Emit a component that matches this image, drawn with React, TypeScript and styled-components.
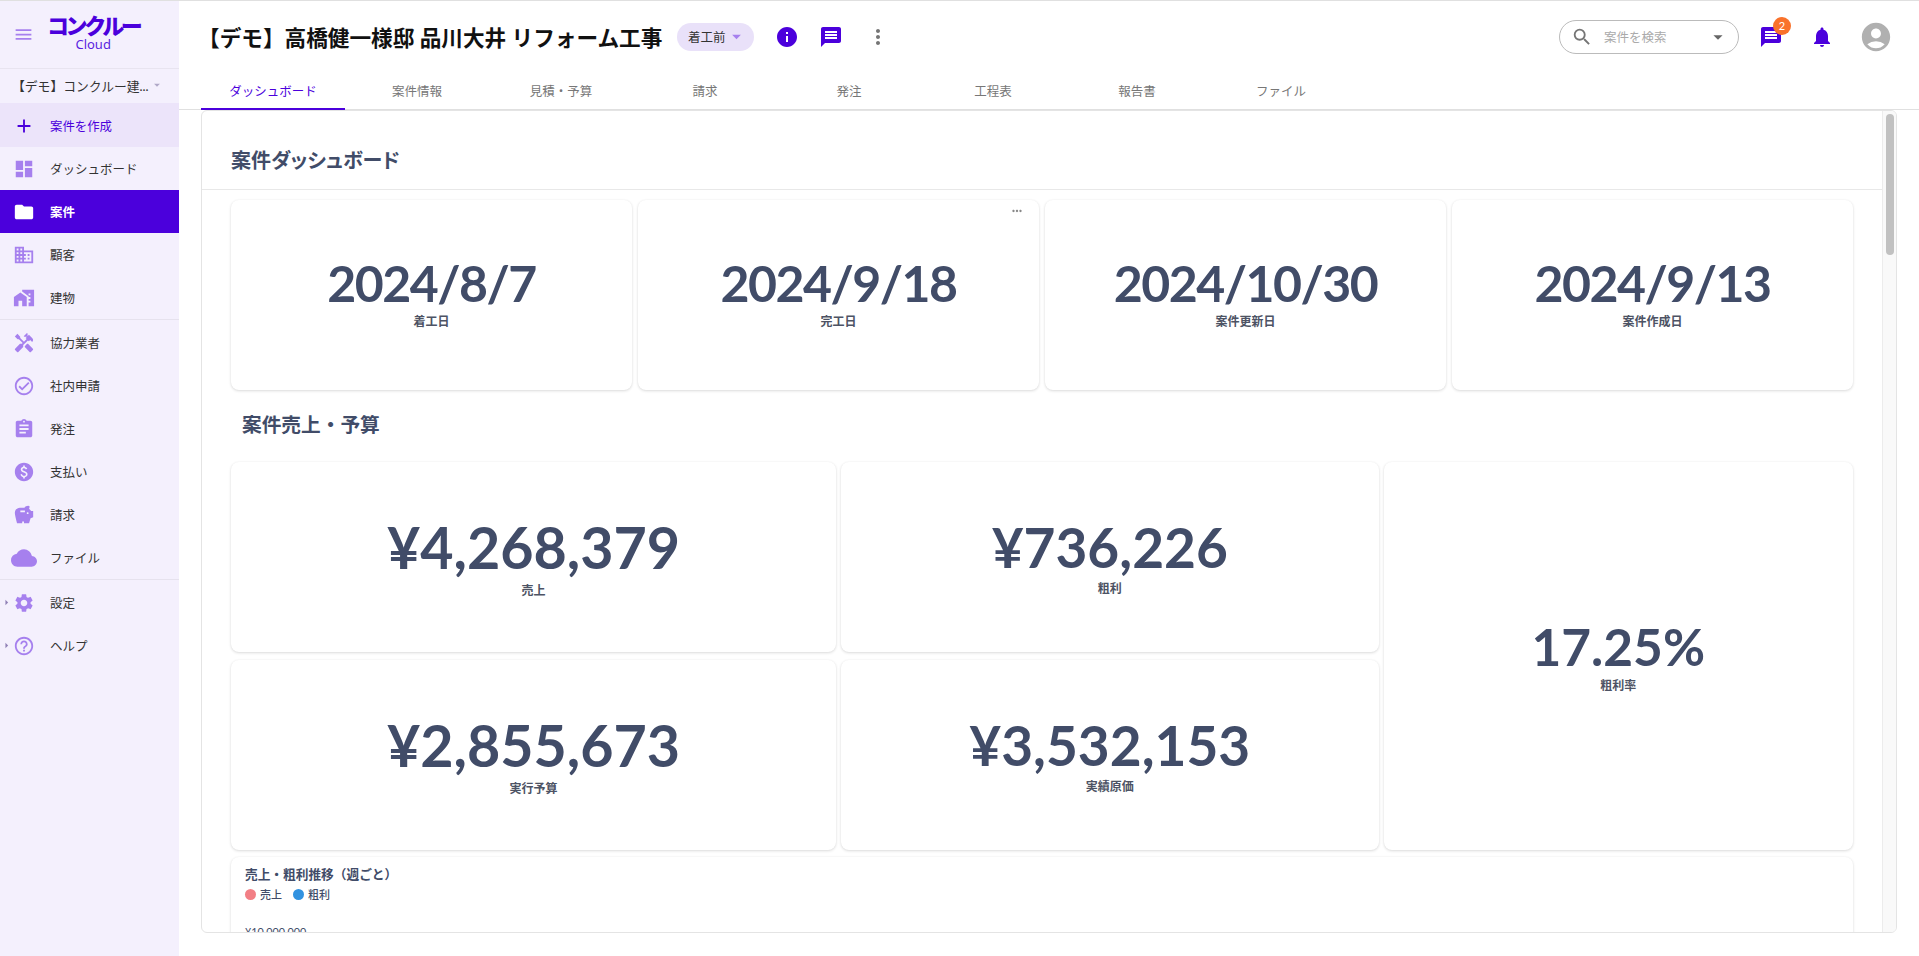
import React from 'react';
import styled, { createGlobalStyle } from 'styled-components';
import {
  MdAdd,
  MdMenu,
  MdDashboard,
  MdFolder,
  MdDomain,
  MdHomeWork,
  MdHandyman,
  MdOutlineCheckCircle,
  MdAssignment,
  MdPaid,
  MdSavings,
  MdCloud,
  MdSettings,
  MdHelpOutline,
  MdInfo,
  MdMessage,
  MdMoreVert,
  MdMoreHoriz,
  MdSearch,
  MdArrowDropDown,
  MdArrowRight,
  MdNotifications,
  MdAccountCircle,
} from 'react-icons/md';

const PURPLE = '#4b00dc';
const ICON_PURPLE = '#a680ee';
const SLATE = '#414c68';
const FONT = `Lato, "Noto Sans CJK JP", sans-serif`;

const GlobalStyle = createGlobalStyle`
  html, body {
    margin: 0;
    padding: 0;
    height: 100%;
    overflow: hidden;
    background: #fff;
    font-family: ${FONT};
  }
  * {
    box-sizing: border-box;
  }
`;

const Page = styled.div`
  display: flex;
  height: 956px;
  border-top: 1px solid #e0e0e0;
`;

const Sidebar = styled.aside`
  flex: 0 0 179px;
  background: #f4f0fd;
  display: flex;
  flex-direction: column;
`;

const LogoArea = styled.div`
  height: 68px;
  display: flex;
  align-items: center;
  padding-left: 13px;
  gap: 13px;
  border-bottom: 1px solid #e8e4f0;
  color: ${ICON_PURPLE};
  font-size: 21px;
`;

const Logo = styled.div`
  display: flex;
  flex-direction: column;
  align-items: center;
  margin-top: -4px;
`;

const LogoMark = styled.span`
  color: ${PURPLE};
  font-size: 22px;
  line-height: 23px;
  font-weight: 900;
  letter-spacing: -3.4px;
`;

const LogoSub = styled.span`
  color: #5a1fe0;
  font-family: "Noto Sans", sans-serif;
  font-size: 13px;
  line-height: 14px;
`;

const OrgSelect = styled.div`
  height: 34px;
  display: flex;
  align-items: center;
  padding: 0 0 2px 12px;
  font-size: 12.8px;
  color: #333;
  white-space: nowrap;
`;

const OrgCaret = styled(MdArrowDropDown)`
  color: #b0a8c8;
  font-size: 14px;
  margin-left: 1px;
`;

const CreateRow = styled.div`
  height: 44px;
  display: flex;
  align-items: center;
  padding-top: 1px;
  background: #ece4fa;
  color: ${PURPLE};
  font-size: 12.4px;
`;

const NavRow = styled.div<{ $active?: boolean }>`
  height: 43px;
  display: flex;
  align-items: center;
  position: relative;
  font-size: 12.5px;
  background: ${(p) => (p.$active ? PURPLE : 'transparent')};
  color: ${(p) => (p.$active ? '#fff' : '#333')};
  font-weight: ${(p) => (p.$active ? 700 : 400)};
`;

const NavIcon = styled.span<{ $color?: string; $size?: number }>`
  flex: 0 0 50px;
  display: flex;
  justify-content: center;
  padding-right: 3px;
  font-size: ${(p) => p.$size ?? 22}px;
  color: ${(p) => p.$color || ICON_PURPLE};
`;

const Expander = styled(MdArrowRight)`
  position: absolute;
  left: 0;
  top: 15px;
  font-size: 13px;
  color: #8f7fb5;
`;

const NavDivider = styled.div`
  height: 1px;
  margin-bottom: 1px;
  background: #e6e2ee;
`;

const Main = styled.main`
  flex: 1;
  min-width: 0;
  display: flex;
  flex-direction: column;
`;

const TopBar = styled.div`
  height: 71px;
  display: flex;
  align-items: center;
  padding: 0 26px 0 22px;
`;

const Title = styled.h1`
  margin: 0 0 0 -3px;
  font-size: 21.65px;
  font-weight: 700;
  color: #111;
  white-space: nowrap;
`;

const StatusChip = styled.div`
  margin-left: 15px;
  height: 28px;
  width: 77px;
  padding-left: 3px;
  border-radius: 14px;
  background: #e9e1f9;
  display: flex;
  align-items: center;
  justify-content: center;
  font-size: 12.5px;
  color: #333;
`;

const ChipCaret = styled(MdArrowDropDown)`
  font-size: 21px;
  color: ${ICON_PURPLE};
`;

const TopIcon = styled.span<{ $left?: number; $color?: string; $size?: number }>`
  display: flex;
  margin-left: ${(p) => p.$left ?? 0}px;
  font-size: ${(p) => p.$size ?? 24}px;
  color: ${(p) => p.$color || PURPLE};
  position: relative;
`;

const Spacer = styled.div`
  flex: 1;
`;

const SearchBox = styled.div`
  width: 180px;
  height: 34px;
  border: 1px solid #bbb;
  border-radius: 17px;
  display: flex;
  align-items: center;
  padding: 0 9px 0 11px;
  font-size: 12.5px;
  color: #aaa;
`;

const SearchIcon = styled(MdSearch)`
  font-size: 22px;
  color: #757575;
  margin-right: 11px;
`;

const SearchCaret = styled(MdArrowDropDown)`
  font-size: 22px;
  color: #666;
  margin-left: auto;
`;

const Badge = styled.span`
  position: absolute;
  top: -8px;
  right: -8px;
  width: 18px;
  height: 18px;
  border-radius: 50%;
  background: #f9722b;
  color: #fff;
  font-size: 11px;
  display: flex;
  align-items: center;
  justify-content: center;
`;

const Tabs = styled.nav`
  height: 38px;
  display: flex;
  padding-left: 22px;
  border-bottom: 1px solid #e0e0e0;
`;

const Tab = styled.div<{ $active?: boolean }>`
  width: 144px;
  height: 38px;
  display: flex;
  align-items: center;
  justify-content: center;
  font-size: 12.5px;
  color: ${(p) => (p.$active ? PURPLE : '#777')};
  border-bottom: 2px solid ${(p) => (p.$active ? PURPLE : 'transparent')};
`;

const Panel = styled.section`
  position: relative;
  margin: 0 22px;
  height: 823px;
  border: 1px solid #e4e4e4;
  border-radius: 6px;
  overflow: hidden;
  flex: none;
`;

const Scrollbar = styled.div`
  position: absolute;
  top: 0;
  right: 0;
  bottom: 0;
  width: 14px;
  background: #f9f9f9;
  border-left: 1px solid #ececec;
`;

const ScrollThumb = styled.div`
  margin: 3px 0 0 3px;
  width: 8px;
  height: 141px;
  border-radius: 4px;
  background: #c1c1c1;
`;

const PanelHeader = styled.div`
  height: 79px;
  margin-right: 14px;
  border-bottom: 1px solid #e8e8e8;
  display: flex;
  align-items: center;
  padding: 19px 0 0 29px;
`;

const SectionTitle = styled.h2<{ $palt?: boolean }>`
  margin: 0;
  font-size: ${(p) => (p.$palt ? 20 : 19.7)}px;
  font-weight: 700;
  font-feature-settings: ${(p) => (p.$palt ? '"palt"' : 'normal')};
  color: ${SLATE};
`;

const Content = styled.div`
  padding: 10px 29px 0 29px;
  margin-right: 14px;
  display: flex;
  flex-direction: column;
`;

const Card = styled.div`
  position: relative;
  background: #fff;
  border-radius: 8px;
  box-shadow: 0 1px 3px rgba(0, 0, 0, 0.14), 0 0 2px rgba(0, 0, 0, 0.04);
  display: flex;
  flex-direction: column;
  align-items: center;
  justify-content: center;
  color: ${SLATE};
`;

const DateCard = styled(Card)`
  padding-bottom: 4px;
`;

const DateRow = styled.div`
  display: grid;
  grid-template-columns: repeat(4, 1fr);
  gap: 6px;
  height: 190px;
`;

const BigValue = styled.div<{ $size: number; $track?: number }>`
  font-size: ${(p) => p.$size}px;
  letter-spacing: ${(p) => p.$track ?? 0}px;
  line-height: 1.1;
  font-weight: 700;
`;

const ValueLabel = styled.div<{ $gap?: number }>`
  margin-top: ${(p) => p.$gap ?? 4}px;
  font-size: 12px;
  line-height: 16px;
  font-weight: 700;
  color: #4d5364;
`;

const CardMenu = styled(MdMoreHoriz)`
  position: absolute;
  top: 4px;
  right: 15px;
  font-size: 14px;
  color: #888;
`;

const SectionBar = styled.div`
  height: 72px;
  display: flex;
  align-items: center;
  padding: 0 0 5px 11px;
`;

const MoneyGrid = styled.div`
  display: grid;
  grid-template-columns: 605px 537.5px 1fr;
  grid-template-rows: 190px 190px;
  gap: 8px 5px;
`;

const RateCard = styled(Card)`
  grid-column: 3;
  grid-row: 1 / span 2;
`;

const ChartCard = styled.div`
  margin-top: 7px;
  background: #fff;
  border-radius: 8px;
  box-shadow: 0 1px 3px rgba(0, 0, 0, 0.14), 0 0 2px rgba(0, 0, 0, 0.04);
  height: 300px;
  padding: 7px 14px;
  color: ${SLATE};
`;

const ChartTitle = styled.div`
  font-size: 12.7px;
  font-weight: 700;
`;

const Legend = styled.div`
  display: flex;
  gap: 11px;
  margin-top: 3px;
  font-size: 11px;
  font-weight: 500;
`;

const LegendItem = styled.span`
  display: flex;
  align-items: center;
  gap: 4px;
`;

const Dot = styled.i<{ $color: string }>`
  width: 11px;
  height: 11px;
  border-radius: 50%;
  background: ${(p) => p.$color};
`;

const AxisLabel = styled.div`
  margin-top: 23px;
  font-size: 10.8px;
  line-height: 14px;
`;

type NavItem = { label: string; icon: React.ReactNode; active?: boolean; expand?: boolean; size?: number };

const topNav: NavItem[] = [
  { label: 'ダッシュボード', icon: <MdDashboard /> },
  { label: '案件', icon: <MdFolder />, active: true },
  { label: '顧客', icon: <MdDomain /> },
  { label: '建物', icon: <MdHomeWork /> },
];

const midNav: NavItem[] = [
  { label: '協力業者', icon: <MdHandyman /> },
  { label: '社内申請', icon: <MdOutlineCheckCircle /> },
  { label: '発注', icon: <MdAssignment /> },
  { label: '支払い', icon: <MdPaid /> },
  { label: '請求', icon: <MdSavings /> },
  { label: 'ファイル', icon: <MdCloud />, size: 26 },
];

const bottomNav: NavItem[] = [
  { label: '設定', icon: <MdSettings />, expand: true },
  { label: 'ヘルプ', icon: <MdHelpOutline />, expand: true },
];

const tabs = ['ダッシュボード', '案件情報', '見積・予算', '請求', '発注', '工程表', '報告書', 'ファイル'];

const dates = [
  { value: '2024/8/7', label: '着工日' },
  { value: '2024/9/18', label: '完工日', menu: true },
  { value: '2024/10/30', label: '案件更新日' },
  { value: '2024/9/13', label: '案件作成日' },
];

const renderNav = (items: NavItem[]) =>
  items.map((item) => (
    <NavRow key={item.label} $active={item.active}>
      {item.expand && <Expander />}
      <NavIcon $color={item.active ? '#fff' : undefined} $size={item.size}>
        {item.icon}
      </NavIcon>
      {item.label}
    </NavRow>
  ));

const App: React.FC = () => {
  return (
    <Page>
      <GlobalStyle />
      <Sidebar>
        <LogoArea>
          <MdMenu />
          <Logo>
            <LogoMark>コンクルー</LogoMark>
            <LogoSub>Cloud</LogoSub>
          </Logo>
        </LogoArea>
        <OrgSelect>
          【デモ】コンクルー建...
          <OrgCaret />
        </OrgSelect>
        <CreateRow>
          <NavIcon $color={PURPLE}>
            <MdAdd />
          </NavIcon>
          案件を作成
        </CreateRow>
        {renderNav(topNav)}
        <NavDivider />
        {renderNav(midNav)}
        <NavDivider />
        {renderNav(bottomNav)}
      </Sidebar>
      <Main>
        <TopBar>
          <Title>【デモ】高橋健一様邸 品川大井 リフォーム工事</Title>
          <StatusChip>
            着工前
            <ChipCaret />
          </StatusChip>
          <TopIcon $left={21}>
            <MdInfo />
          </TopIcon>
          <TopIcon $left={20}>
            <MdMessage />
          </TopIcon>
          <TopIcon $left={23} $color="#757575">
            <MdMoreVert />
          </TopIcon>
          <Spacer />
          <SearchBox>
            <SearchIcon />
            案件を検索
            <SearchCaret />
          </SearchBox>
          <TopIcon $left={20}>
            <MdMessage />
            <Badge>2</Badge>
          </TopIcon>
          <TopIcon $left={27}>
            <MdNotifications />
          </TopIcon>
          <TopIcon $left={25} $color="#b0b0b0" $size={34}>
            <MdAccountCircle />
          </TopIcon>
        </TopBar>
        <Tabs>
          {tabs.map((tab, i) => (
            <Tab key={tab} $active={i === 0}>
              {tab}
            </Tab>
          ))}
        </Tabs>
        <Panel>
          <PanelHeader>
            <SectionTitle $palt>案件ダッシュボード</SectionTitle>
          </PanelHeader>
          <Content>
            <DateRow>
              {dates.map((d) => (
                <DateCard key={d.label}>
                  {d.menu && <CardMenu />}
                  <BigValue $size={50} $track={-1.5}>
                    {d.value}
                  </BigValue>
                  <ValueLabel $gap={2.4}>{d.label}</ValueLabel>
                </DateCard>
              ))}
            </DateRow>
            <SectionBar>
              <SectionTitle>案件売上・予算</SectionTitle>
            </SectionBar>
            <MoneyGrid>
              <Card>
                <BigValue $size={57.4}>¥4,268,379</BigValue>
                <ValueLabel>売上</ValueLabel>
              </Card>
              <Card>
                <BigValue $size={55}>¥736,226</BigValue>
                <ValueLabel>粗利</ValueLabel>
              </Card>
              <RateCard>
                <BigValue $size={51.4}>17.25%</BigValue>
                <ValueLabel>粗利率</ValueLabel>
              </RateCard>
              <Card>
                <BigValue $size={57.4}>¥2,855,673</BigValue>
                <ValueLabel>実行予算</ValueLabel>
              </Card>
              <Card>
                <BigValue $size={55}>¥3,532,153</BigValue>
                <ValueLabel>実績原価</ValueLabel>
              </Card>
            </MoneyGrid>
            <ChartCard>
              <ChartTitle>売上・粗利推移（週ごと）</ChartTitle>
              <Legend>
                <LegendItem>
                  <Dot $color="#f27f85" />
                  売上
                </LegendItem>
                <LegendItem>
                  <Dot $color="#3192e0" />
                  粗利
                </LegendItem>
              </Legend>
              <AxisLabel>¥10,000,000</AxisLabel>
            </ChartCard>
          </Content>
          <Scrollbar>
            <ScrollThumb />
          </Scrollbar>
        </Panel>
      </Main>
    </Page>
  );
};

export default App;
